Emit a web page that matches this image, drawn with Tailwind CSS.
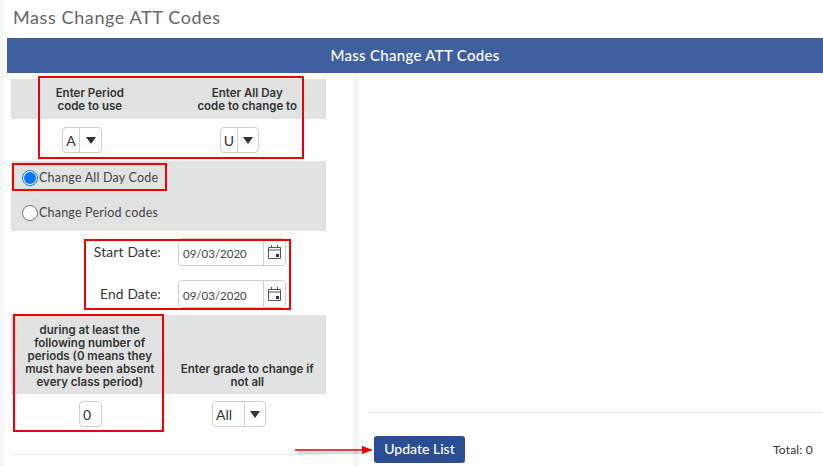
<!DOCTYPE html>
<html lang="en">
<head>
  <meta charset="UTF-8" />
  <title>Mass Change ATT Codes</title>
  <script src="https://cdn.jsdelivr.net/npm/@tailwindcss/browser@4"></script>
</head>
<body class="bg-white">
  <div class="relative w-[823px] h-[466px] overflow-hidden bg-white shadow-[inset_4px_0_0_#f7f7f7] font-['Lato','Noto_Sans',sans-serif] text-[#333]">
    <!-- page title -->
    <h1 class="h-[38px] pl-[13px] pt-[6px] text-[18px] leading-[22px] tracking-[0.6px] text-[#666]">Mass Change ATT Codes</h1>
    <div class="ml-[7px] h-[35px] bg-[#3f5f9f] text-white text-[15px] font-medium tracking-[0.3px] flex items-center justify-center">Mass Change ATT Codes</div>

    <div class="flex h-[393px] ml-[7px]">
      <!-- left form -->
      <div class="w-[346px] pl-[4px] pt-[6px]">
        <div class="w-[315px] font-['Inter',sans-serif] text-[11.5px] font-semibold leading-[13px] text-[#333]">
          <div class="grid grid-cols-2 h-[40px] pt-[2px] bg-[#e1e3e3] text-center items-center">
            <div>Enter Period<br>code to use</div>
            <div>Enter All Day<br>code to change to</div>
          </div>
          <div class="grid grid-cols-[175px_1fr] h-[42px] items-center font-['Lato',sans-serif]">
            <div class="ml-[51px] flex h-[26px] w-[40px] border border-[#d0d0d0] rounded-[4px] bg-white text-[14px] font-normal items-center">
              <span class="w-[16px] text-center">A</span>
              <span class="flex-1 h-full border-l border-[#d0d0d0] flex items-center justify-center"><span class="w-0 h-0 border-x-[5px] border-x-transparent border-t-[7px] border-t-[#333]"></span></span>
            </div>
            <div class="ml-[34px] flex h-[26px] w-[39px] border border-[#d0d0d0] rounded-[4px] bg-white text-[14px] font-normal items-center">
              <span class="w-[16px] text-center">U</span>
              <span class="flex-1 h-full border-l border-[#d0d0d0] flex items-center justify-center"><span class="w-0 h-0 border-x-[5px] border-x-transparent border-t-[7px] border-t-[#333]"></span></span>
            </div>
          </div>
          <div class="h-[70px] bg-[#e1e3e3] font-['Lato',sans-serif] font-normal text-[12.5px] pl-[11px] pt-[8px]">
            <label class="flex items-center h-[17px]">
              <span class="w-[16px] h-[16px] rounded-full border border-[#0075ff] bg-white flex items-center justify-center"><span class="w-[12px] h-[12px] rounded-full bg-[#0075ff]"></span></span>
              <span class="ml-[1px] tracking-[0.2px] text-[#444]">Change All Day Code</span>
            </label>
            <label class="flex items-center h-[17px] mt-[18px]">
              <span class="w-[16px] h-[16px] rounded-full border border-[#767676] bg-white"></span>
              <span class="ml-[1px] tracking-[0.2px] text-[#444]">Change Period codes</span>
            </label>
          </div>
          <!-- dates -->
          <div class="h-[84px] pt-[7px] font-['Lato',sans-serif] font-normal text-[13.75px]">
            <div class="flex items-center h-[28px]">
              <span class="w-[150px] text-right tracking-[0.2px] -mt-[1px]">Start Date:</span>
              <div class="ml-[17px] flex h-[28px] w-[108px] border border-[#d0d0d0] rounded-[4px] bg-white items-center text-[11.5px] text-[#444]">
                <span class="w-[84px] pl-[4px] pt-[3px]">09/03/2020</span>
                <span class="flex-1 h-full border-l border-[#d0d0d0] flex items-center justify-center">
                  <svg width="13" height="14" viewBox="0 0 13 14" fill="none" stroke="#4a5568"><path d="M.5 2.5h12v11H.5z"/><path d="M0 5h13"/><path d="M3.5 0v2.5M9.5 0v2.5"/><path d="M8 9h3v3H8z" fill="#333" stroke="none"/></svg>
                </span>
              </div>
            </div>
            <div class="flex items-center h-[28px] mt-[14px]">
              <span class="w-[150px] text-right tracking-[0.2px] -mt-[1px]">End Date:</span>
              <div class="ml-[17px] flex h-[28px] w-[108px] border border-[#d0d0d0] rounded-[4px] bg-white items-center text-[11.5px] text-[#444]">
                <span class="w-[84px] pl-[4px] pt-[3px]">09/03/2020</span>
                <span class="flex-1 h-full border-l border-[#d0d0d0] flex items-center justify-center">
                  <svg width="13" height="14" viewBox="0 0 13 14" fill="none" stroke="#4a5568"><path d="M.5 2.5h12v11H.5z"/><path d="M0 5h13"/><path d="M3.5 0v2.5M9.5 0v2.5"/><path d="M8 9h3v3H8z" fill="#333" stroke="none"/></svg>
                </span>
              </div>
            </div>
          </div>
          <!-- periods / grade -->
          <div class="grid grid-cols-2 h-[79px] bg-[#e1e3e3] text-center items-end pb-[5px]">
            <div>during at least the<br>following number of<br>periods (0 means they<br>must have been absent<br>every class period)</div>
            <div>Enter grade to change if<br>not all</div>
          </div>
          <div class="grid grid-cols-[175px_1fr] h-[60px] pt-[7px] items-start font-['Lato',sans-serif]">
            <div class="ml-[68px] flex h-[26px] w-[23px] border border-[#d0d0d0] rounded-[4px] bg-white text-[14px] font-normal items-center pl-[3px]">0</div>
            <div class="ml-[26px] flex h-[26px] w-[54px] border border-[#d0d0d0] rounded-[4px] bg-white text-[14px] font-normal items-center">
              <span class="w-[31px] pl-[3px]">All</span>
              <span class="flex-1 h-full border-l border-[#d0d0d0] flex items-center justify-center"><span class="w-0 h-0 border-x-[5px] border-x-transparent border-t-[7px] border-t-[#333]"></span></span>
            </div>
          </div>
          <div class="border-t border-[#e8e8e8]"></div>
        </div>
      </div>
      <!-- splitter -->
      <div class="w-[5px] bg-[#f5f5f5]"></div>
      <!-- right panel -->
      <div class="flex-1 pl-[10px]">
        <div class="h-[340px] border-b border-[#e8e8e8]"></div>
        <div class="flex items-start justify-between mt-[23px] pl-[6px] pr-[10px]">
          <button class="h-[27px] w-[91px] rounded-[3px] bg-[#2a4d96] text-white text-[14px] font-medium pb-[3px]">Update List</button>
          <span class="pt-[5px] text-[12px] text-[#333] tracking-[0.2px]">Total: 0</span>
        </div>
      </div>
    </div>

    <!-- red annotation boxes drawn over the screenshot -->
    <div class="absolute left-[38px] top-[76px] w-[266px] h-[83px] border-2 border-[#f00000]"></div>
    <div class="absolute left-[12px] top-[163px] w-[155px] h-[28px] border-2 border-[#f00000]"></div>
    <div class="absolute left-[84px] top-[239px] w-[207px] h-[71px] border-2 border-[#f00000]"></div>
    <div class="absolute left-[13px] top-[314px] w-[151px] h-[118px] border-2 border-[#f00000]"></div>
    <!-- arrow to the button -->
    <svg class="absolute left-[290px] top-[439px]" width="86" height="20" viewBox="0 0 86 20" fill="none">
      <path d="M6 12.5h68l-2 2.5H8z" fill="#000" fill-opacity=".15"/>
      <path d="M5 11h70" stroke="#e60000" stroke-width="1.5"/>
      <path d="M83 11l-11-4v8z" fill="#e60000"/>
    </svg>
  </div>
</body>
</html>
